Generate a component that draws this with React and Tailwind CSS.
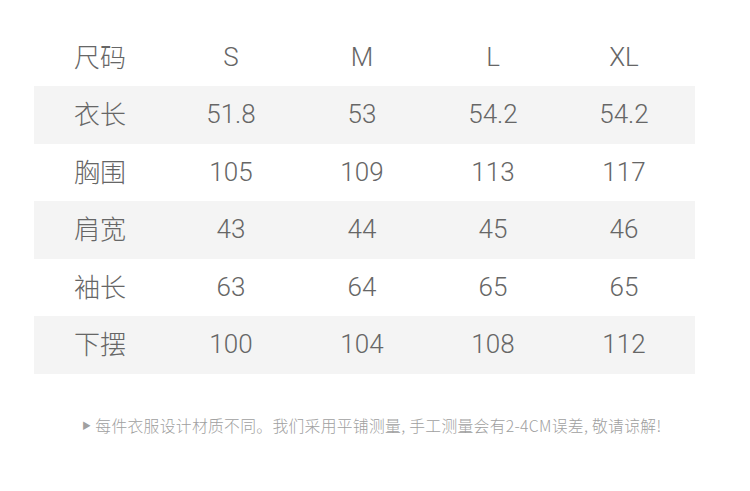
import React from "react";

const sizes = ["S", "M", "L", "XL"];

const rows = [
  { name: "衣长", values: ["51.8", "53", "54.2", "54.2"] },
  { name: "胸围", values: ["105", "109", "113", "117"] },
  { name: "肩宽", values: ["43", "44", "45", "46"] },
  { name: "袖长", values: ["63", "64", "65", "65"] },
  { name: "下摆", values: ["100", "104", "108", "112"] },
];

const Row = ({ name, values, shaded }) => (
  <div
    className={
      "grid grid-cols-[131px_131px_131px_131px_131px] h-[57.5px] items-center pl-[0.5px] pr-[5.5px] " +
      (shaded ? "bg-[#f4f4f4]" : "")
    }
  >
    <div className="text-center text-[26px] pb-[4px]">{name}</div>
    {values.map((v, i) => (
      <div key={i} className="text-center text-[26px] font-['Roboto',sans-serif]">
        {v}
      </div>
    ))}
  </div>
);

const App = () => {
  return (
    <div
      className="w-[750px] h-[491px] bg-white text-[#666] font-light"
      style={{ fontFamily: '"Noto Sans CJK SC", "Noto Sans", sans-serif' }}
    >
      <div className="pt-[28.5px] pl-[34px] w-[695px]">
        <Row name="尺码" values={sizes} />
        {rows.map((r, i) => (
          <Row key={r.name} {...r} shaded={i % 2 === 0} />
        ))}
      </div>

      <div className="mt-[40px] flex items-center pl-[82px] text-[15.8px] tracking-[0.3px] text-[#a0a0a0]">
        <span className="text-[9px] mr-[4px]">▶</span>
        <span>每件衣服设计材质不同。我们采用平铺测量, 手工测量会有2-4CM误差, 敬请谅解!</span>
      </div>
    </div>
  );
};

export default App;
